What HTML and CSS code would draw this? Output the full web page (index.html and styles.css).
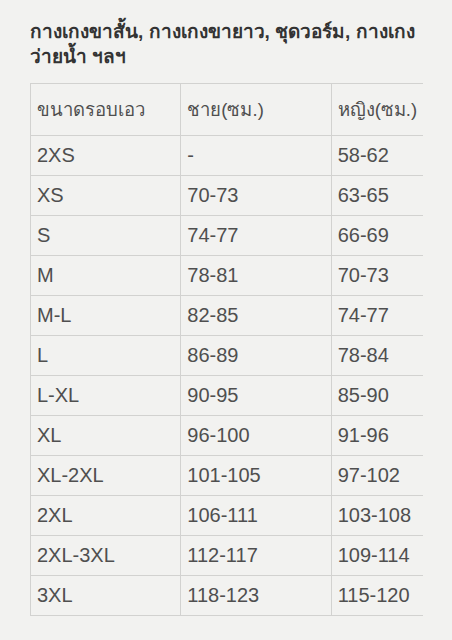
FILE: index.html
```html
<!DOCTYPE html>
<html lang="th">
<head>
<meta charset="utf-8">
<link rel="stylesheet" href="styles.css">
</head>
<body>
<div class="page">
  <h1 class="title">กางเกงขาสั้น, กางเกงขายาว, ชุดวอร์ม, กางเกงว่ายน้ำ ฯลฯ</h1>
  <div class="table-clip">
    <table class="sizes">
      <thead>
        <tr><th>ขนาดรอบเอว</th><th>ชาย(ซม.)</th><th>หญิง(ซม.)</th></tr>
      </thead>
      <tbody>
        <tr><td>2XS</td><td>-</td><td>58-62</td></tr>
        <tr><td>XS</td><td>70-73</td><td>63-65</td></tr>
        <tr><td>S</td><td>74-77</td><td>66-69</td></tr>
        <tr><td>M</td><td>78-81</td><td>70-73</td></tr>
        <tr><td>M-L</td><td>82-85</td><td>74-77</td></tr>
        <tr><td>L</td><td>86-89</td><td>78-84</td></tr>
        <tr><td>L-XL</td><td>90-95</td><td>85-90</td></tr>
        <tr><td>XL</td><td>96-100</td><td>91-96</td></tr>
        <tr><td>XL-2XL</td><td>101-105</td><td>97-102</td></tr>
        <tr><td>2XL</td><td>106-111</td><td>103-108</td></tr>
        <tr><td>2XL-3XL</td><td>112-117</td><td>109-114</td></tr>
        <tr><td>3XL</td><td>118-123</td><td>115-120</td></tr>
      </tbody>
    </table>
  </div>
</div>
</body>
</html>
```
FILE: styles.css
```css
html, body {
  margin: 0;
  padding: 0;
  background: #f2f2f0;
}
.page {
  width: 452px;
  height: 640px;
  box-sizing: border-box;
  padding: 19px 0 0 30px;
  font-family: "Liberation Sans", "Noto Sans", sans-serif;
}
.title {
  margin: 0;
  width: 400px;
  font-size: 19px;
  line-height: 25px;
  font-weight: bold;
  color: #333333;
}
.table-clip {
  margin-top: 14px;
  width: 393px;
  overflow: hidden;
}
.sizes {
  border-collapse: collapse;
  width: 452px;
  table-layout: fixed;
  color: #4f4f4f;
  font-size: 20px;
}
.sizes th,
.sizes td {
  border: 1px solid #d2d2d0;
  padding: 0 0 0 6px;
  text-align: left;
  font-weight: normal;
  width: 150px;
  box-sizing: border-box;
}
.sizes th {
  height: 52px;
  font-size: 18.5px;
}
.sizes td {
  height: 40px;
}
```
